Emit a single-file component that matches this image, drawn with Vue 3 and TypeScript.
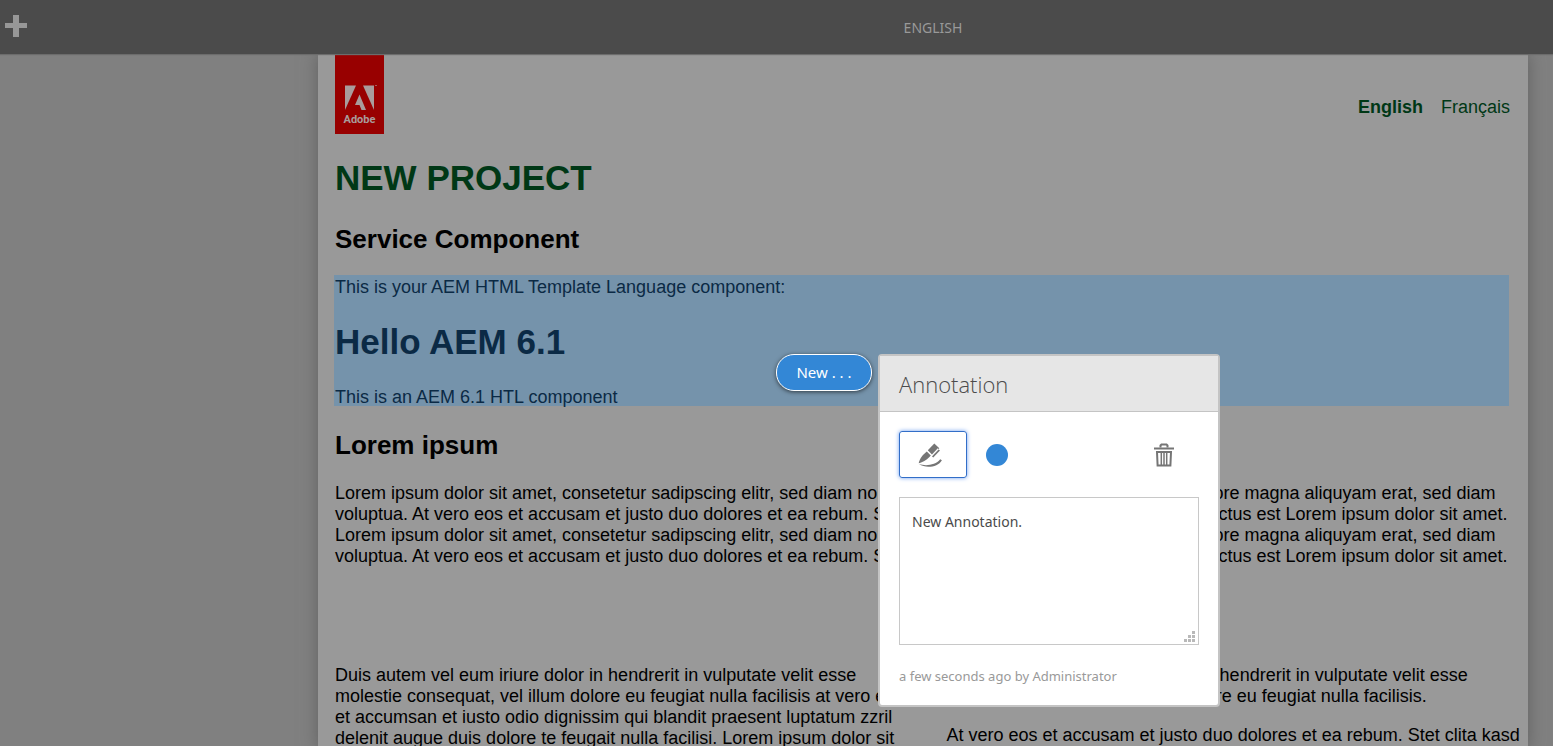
<script setup lang="ts">
import { ref } from 'vue'

const note = ref('New Annotation.')

const lorem =
  'Lorem ipsum dolor sit amet, consetetur sadipscing elitr, sed diam nonumy eirmod tempor invidunt ut labore dolore magna aliquyam erat, sed diam voluptua. At vero eos et accusam et justo duo dolores et ea rebum. Stet clita kasd gubergren, sea takimata sanctus est Lorem ipsum dolor sit amet.'
</script>

<template>
  <div class="screen">
    <header class="topbar">
      <button class="add" type="button" aria-label="Add annotation">
        <svg width="22" height="22" viewBox="0 0 22 22"><path d="M8 0h6v8h8v5h-8v9H8v-9H0V8h8z" fill="#979797" /></svg>
      </button>
      <span class="title">ENGLISH</span>
    </header>

    <div class="stage">
      <main class="page">
        <div class="masthead">
          <a href="#" class="logo" aria-label="Adobe">
            <svg width="49" height="80" viewBox="0 0 49 80">
              <rect width="49" height="80" fill="#980000" />
              <g fill="#a99c9c">
                <path d="M10 31.5h11L10 56z" />
                <path d="M28 31.5h11V56z" />
                <path d="M24.500 40.500 31 56h-4.500l-2-5h-4.500z" />
                <rect x="40" y="31" width="2" height="1" opacity=".6" />
                <text x="24.500" y="69" text-anchor="middle" class="logo-text">Adobe</text>
              </g>
            </svg>
          </a>
          <nav class="languages">
            <a href="#" class="current">English</a>
            <a href="#">Français</a>
          </nav>
        </div>

        <h1 class="project">NEW PROJECT</h1>
        <h2>Service Component</h2>

        <section class="selected">
          <p>This is your AEM HTML Template Language component:</p>
          <h1>Hello AEM 6.1</h1>
          <p>This is an AEM 6.1 HTL component</p>
        </section>

        <h2>Lorem ipsum</h2>
        <p>{{ lorem }}<br />{{ lorem }}</p>

        <div class="columns">
          <div>
            <p>
              Duis autem vel eum iriure dolor in hendrerit in vulputate velit esse<br />
              molestie consequat, vel illum dolore eu feugiat nulla facilisis at vero eros<br />
              et accumsan et iusto odio dignissim qui blandit praesent luptatum zzril<br />
              delenit augue duis dolore te feugait nulla facilisi. Lorem ipsum dolor sit
            </p>
          </div>
          <div>
            <p>
              Duis autem vel eum iriure dolor in hendrerit in vulputate velit esse<br />
              molestie consequat, vel illum dolore eu feugiat nulla facilisis.
            </p>
            <p>At vero eos et accusam et justo duo dolores et ea rebum. Stet clita kasd</p>
          </div>
        </div>
      </main>

      <button class="marker" type="button">New . . .</button>

      <section class="popover" aria-labelledby="popover-title">
        <h2 id="popover-title" class="popover-title">Annotation</h2>
        <div class="popover-body">
          <div class="tools">
            <button class="sketch" type="button" aria-label="Sketch">
              <svg width="24" height="24" viewBox="0 0 24 24" fill="#757575">
                <path d="M16.300.6 21.300 5.300 14.700 12.200 9.800 7.300z" />
                <path d="M20.300 5.800 13.500 13" stroke="#fff" stroke-width="1.300" />
                <path d="M21.300 7 14.600 14" stroke="#757575" stroke-width="1.800" />
                <path d="M8.800 8.600 12.800 12.500C10 16 5.500 19.300.7 20.200 1.500 16 5 11.500 8.800 8.600z" />
                <path d="M1 21.300C8 23 17.500 22.500 22.200 16.300l1.700.9C20 24.300 8 25.600 1 21.300z" />
              </svg>
            </button>
            <button class="color" type="button" aria-label="Colour"></button>
            <button class="delete" type="button" aria-label="Delete">
              <svg width="20" height="24" viewBox="0 0 20 24" fill="none" stroke="#757575">
                <path d="M6.500 4.500v-2l1-1h5l1 1v2" stroke-width="2" />
                <path d="M0 5.500h20" stroke-width="2" />
                <path d="M3 9l.6 13.500h12.800L17 9z" stroke-width="2" />
                <path d="M7.300 9v13M10 9v13M12.700 9v13" stroke-width="1.500" />
              </svg>
            </button>
          </div>
          <div class="field">
            <textarea v-model="note" aria-label="Annotation text"></textarea>
            <svg class="grip" width="11" height="11" viewBox="0 0 11 11" fill="#b9b9b9">
              <path d="M8 0h3v3H8zM4 4h3v3H4zM8 4h3v3H8zM0 8h3v3H0zM4 8h3v3H4zM8 8h3v3H8z" />
            </svg>
          </div>
          <p class="meta">a few seconds ago by Administrator</p>
        </div>
      </section>
    </div>
  </div>
</template>

<style>
body {
  background: #808080;
}
</style>

<style scoped>
.screen {
  display: flex;
  flex-direction: column;
  height: 100vh;
  overflow: hidden;
  font-family: "Liberation Sans", Arial, sans-serif;
  font-size: 18px;
  line-height: 21px;
  color: #000;
}
button {
  padding: 0;
  border: 0;
  background: none;
  font: inherit;
  cursor: pointer;
}
svg {
  display: block;
}
.topbar {
  flex: none;
  z-index: 1;
  display: grid;
  grid-template-columns: 313px 1fr;
  align-items: center;
  height: 54px;
  background: #4b4b4b;
  box-shadow: 0 1px 1px #6c6c6c;
}
.add {
  width: 22px;
  margin: 0 0 2px 5px;
}
.title {
  text-align: center;
  font-family: "Noto Sans", sans-serif;
  font-size: 14px;
  color: #999;
}
.stage {
  position: relative;
  flex: 1;
  min-height: 0;
}
.page {
  box-sizing: border-box;
  min-height: 100%;
  margin: 0 25px 0 318px;
  padding: 0 18px 0 17px;
  background: #999;
  box-shadow: 0 0 16px #606060;
}
.masthead {
  display: flex;
  justify-content: space-between;
  height: 80px;
}
.logo-text {
  font-family: Roboto, sans-serif;
  font-size: 11px;
  font-weight: 700;
}
.languages {
  display: flex;
  gap: 18px;
  padding-top: 43px;
}
.languages a {
  color: #003816;
  text-decoration: none;
}
.languages .current {
  font-weight: 700;
}
h1,
h2,
p {
  margin: 0;
}
h1 {
  font-size: 35px;
  line-height: 41px;
}
h2 {
  font-size: 26px;
  line-height: 31px;
}
.project {
  margin: 23px 0 26px;
  color: #003816;
}
.selected {
  margin: 20px 1px 24px -1px;
  padding: 2px 0 0 1px;
  height: 129px;
  background: #7593ab;
  color: #0b2a45;
}
.selected h1 {
  margin: 23px 0 25px;
}
.page > p {
  margin-top: 22px;
}
.columns {
  display: grid;
  grid-template-columns: repeat(2, minmax(0, 1fr));
  gap: 48px;
  margin-top: 98px;
  white-space: nowrap;
}
.columns p + p {
  margin-top: 18px;
}
.marker {
  position: absolute;
  top: 300px;
  left: 776px;
  width: 96px;
  height: 37px;
  border: 1px solid #fff;
  border-radius: 18px;
  background: #3387d6;
  box-shadow: 0 1px 4px rgba(0, 0, 0, 0.6);
  color: #fff;
  font-family: "Noto Sans", sans-serif;
  font-size: 15px;
}
.popover {
  position: absolute;
  top: 300px;
  left: 878px;
  box-sizing: border-box;
  width: 342px;
  border: 2px solid #c4c4c4;
  border-radius: 4px;
  background: #fff;
  font-family: "Noto Sans", sans-serif;
}
.popover-title {
  padding: 13px 19px 11px;
  border-bottom: 1px solid #c4c4c4;
  background: #e6e6e6;
  color: #4b4b4b;
  font-family: "Open Sans", sans-serif;
  font-size: 22px;
  font-weight: 300;
}
.popover-body {
  padding: 19px 19px 18px;
}
.tools {
  display: flex;
  align-items: center;
  gap: 19px;
}
.sketch {
  box-sizing: border-box;
  width: 68px;
  height: 47px;
  padding-left: 18px;
  border: 1px solid #326ec8;
  border-radius: 3px;
  box-shadow: 0 0 4px #6f9ff0;
}
.color {
  width: 22px;
  height: 22px;
  border-radius: 50%;
  background: #3387d6;
}
.delete {
  margin: 0 25px 0 auto;
}
.field {
  position: relative;
  margin-top: 19px;
}
textarea {
  display: block;
  box-sizing: border-box;
  width: 100%;
  height: 148px;
  padding: 13px 12px;
  border: 1px solid #c8c8c8;
  outline: 0;
  resize: none;
  background: #fff;
  color: #4b4b4b;
  font-family: "Noto Sans", sans-serif;
  font-size: 14px;
  line-height: 21px;
}
.grip {
  position: absolute;
  right: 4px;
  bottom: 3px;
}
.meta {
  padding: 21px 0 0;
  color: #999;
  font-size: 13px;
}
</style>
